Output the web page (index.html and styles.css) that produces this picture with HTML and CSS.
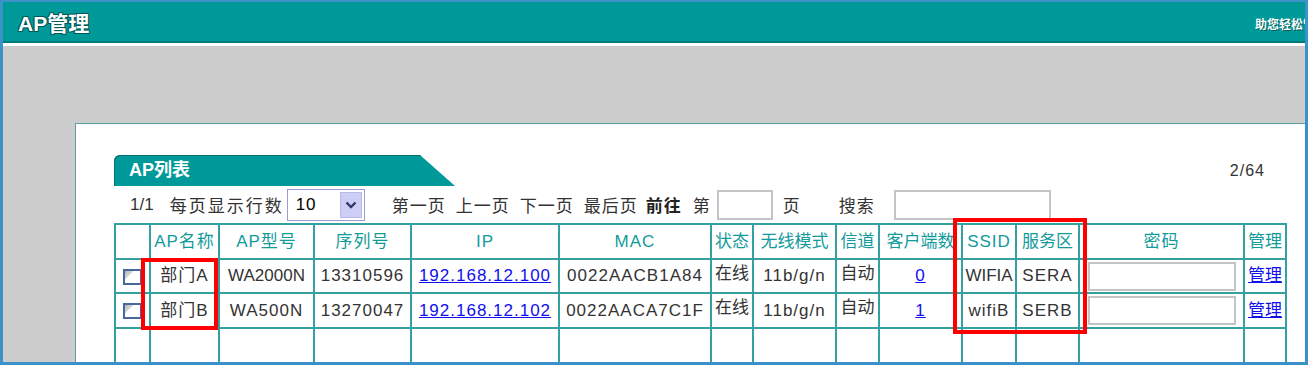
FILE: index.html
```html
<!DOCTYPE html>
<html lang="zh-CN">
<head>
    <meta charset="UTF-8">
    <title>AP管理</title>
    <link rel="stylesheet" href="styles.css">
</head>
<body>

<div class="frame">
    <div class="topbar">
        <h1 class="title">AP管理</h1>
        <span class="slogan">助您轻松管理</span>
    </div>

    <div class="workspace">
        <div class="panel">
            <div class="tab-row">
                <div class="tab">AP列表</div>
                <span class="count">2/64</span>
            </div>

            <div class="toolbar">
                <span class="pages">1/1</span>
                <span class="rows-label">每页显示行数</span>
                <div class="select">
                    <span class="select-value">10</span>
                    <span class="select-btn">
                        <svg width="12" height="8" viewBox="0 0 12 8"><path d="M1.5 1.5 L6 6 L10.5 1.5" fill="none" stroke="#2e3a6e" stroke-width="2.4"/></svg>
                    </span>
                </div>
                <span class="nav first">第一页</span>
                <span class="nav">上一页</span>
                <span class="nav">下一页</span>
                <span class="nav">最后页</span>
                <b class="goto">前往</b>
                <span class="page-pre">第</span>
                <span class="box page-box"></span>
                <span class="page-post">页</span>
                <span class="search-label">搜索</span>
                <span class="box search-box"></span>
            </div>

            <table class="ap-table">
                <colgroup>
                    <col style="width:35px"><col style="width:69px"><col style="width:95px"><col style="width:97px">
                    <col style="width:148px"><col style="width:152px"><col style="width:42px"><col style="width:83px">
                    <col style="width:43px"><col style="width:83px"><col style="width:54px"><col style="width:63px">
                    <col style="width:165px"><col style="width:42px">
                </colgroup>
                <tr class="head">
                    <th></th>
                    <th>AP名称</th>
                    <th>AP型号</th>
                    <th>序列号</th>
                    <th>IP</th>
                    <th>MAC</th>
                    <th class="tight">状态</th>
                    <th class="tight">无线模式</th>
                    <th class="tight">信道</th>
                    <th class="tight">客户端数</th>
                    <th>SSID</th>
                    <th class="tight">服务区</th>
                    <th>密码</th>
                    <th class="tight">管理</th>
                </tr>
                <tr class="row1">
                    <td><span class="check"></span></td>
                    <td>部门A</td>
                    <td class="tight">WA2000N</td>
                    <td>13310596</td>
                    <td><a href="#">192.168.12.100</a></td>
                    <td>0022AACB1A84</td>
                    <td class="tight up">在线</td>
                    <td>11b/g/n</td>
                    <td class="tight up">自动</td>
                    <td><a href="#">0</a></td>
                    <td class="tight">WIFIA</td>
                    <td>SERA</td>
                    <td class="pw"><span class="pw-input"></span></td>
                    <td class="tight"><a href="#">管理</a></td>
                </tr>
                <tr class="row2">
                    <td><span class="check"></span></td>
                    <td>部门B</td>
                    <td>WA500N</td>
                    <td>13270047</td>
                    <td><a href="#">192.168.12.102</a></td>
                    <td>0022AACA7C1F</td>
                    <td class="tight up">在线</td>
                    <td>11b/g/n</td>
                    <td class="tight up">自动</td>
                    <td><a href="#">1</a></td>
                    <td>wifiB</td>
                    <td>SERB</td>
                    <td class="pw"><span class="pw-input"></span></td>
                    <td class="tight"><a href="#">管理</a></td>
                </tr>
                <tr class="row3">
                    <td></td><td></td><td></td><td></td><td></td><td></td><td></td>
                    <td></td><td></td><td></td><td></td><td></td><td></td><td></td>
                </tr>
            </table>

            <div class="mark mark-name"></div>
            <div class="mark mark-ssid"></div>
        </div>
    </div>
</div>

</body>
</html>
```

FILE: styles.css
```css
html, body {
    margin: 0;
    padding: 0;
}

body {
    font-family: "Liberation Sans", "Noto Sans CJK SC", sans-serif;
    font-size: 17px;
    color: #333;
    background-color: #fff;
}

.frame {
    width: 1308px;
    height: 365px;
    box-sizing: border-box;
    border: 3px solid #3a92c8;
    border-top-width: 2px;
    display: flex;
    flex-direction: column;
    overflow: hidden;
}

.topbar {
    height: 39px;
    flex-shrink: 0;
    background-color: #009999;
    border-bottom: 2px solid #007b7b;
    display: flex;
    align-items: center;
    padding-left: 15px;
    overflow: hidden;
}

.title {
    margin: 0;
    font-size: 21px;
    font-weight: bold;
    color: #fff;
    text-shadow: 1px 1px 0 #005a5a, -1px -1px 0 #005a5a, 1px -1px 0 #005a5a, -1px 1px 0 #005a5a;
}

.slogan {
    margin-left: auto;
    margin-right: -22px;
    flex-shrink: 0;
    font-size: 12px;
    font-weight: bold;
    color: #fff;
    text-shadow: 1px 1px 0 #006060;
    align-self: flex-start;
    margin-top: 13px;
}

.workspace {
    flex: 1;
    background-color: #cccccc;
    border-top: 3px solid #fff;
    padding: 77px 0 0 72px;
    display: flex;
}

.panel {
    flex: 1;
    position: relative;
    background-color: #fff;
    border-top: 1px solid #5f9ea0;
    border-left: 1px solid #5f9ea0;
    padding: 31px 0 0 38px;
}

.tab-row {
    width: 1171px;
    display: flex;
    align-items: center;
    justify-content: space-between;
}

.tab {
    width: 341px;
    height: 31px;
    box-sizing: border-box;
    background-color: #009999;
    clip-path: polygon(0 0, 306px 0, 341px 100%, 0 100%);
    border-top-left-radius: 6px;
    box-shadow: inset 1px 1px 0 #0b6f6f;
    color: #fff;
    font-size: 18px;
    font-weight: bold;
    line-height: 31px;
    padding-left: 15px;
}

.count {
    padding-right: 20px;
    font-size: 16px;
    letter-spacing: 1px;
}

.toolbar {
    height: 37px;
    display: flex;
    align-items: center;
    padding-left: 16px;
    letter-spacing: 1px;
}

.pages {
    letter-spacing: 0;
}

.rows-label {
    margin-left: 16px;
    letter-spacing: 2px;
}

.select {
    margin-left: 3px;
    width: 78px;
    height: 32px;
    box-sizing: border-box;
    border: 1px solid #9c9cd4;
    display: flex;
    align-items: center;
    justify-content: space-between;
    padding: 0 2px 0 8px;
    color: #000;
}

.select-btn {
    width: 22px;
    height: 26px;
    box-sizing: border-box;
    background-color: #cdcdf5;
    border: 1px solid #b8b8ea;
    display: flex;
    align-items: center;
    justify-content: center;
}

.nav {
    margin-left: 10px;
}

.nav.first {
    margin-left: 27px;
}

.goto {
    margin-left: 8px;
    color: #222;
}

.page-pre {
    margin-left: 11px;
}

.box {
    display: inline-block;
    height: 30px;
    box-sizing: border-box;
    border: 2px solid #c4c4c4;
}

.page-box {
    width: 56px;
    margin-left: 6px;
}

.page-post {
    margin-left: 10px;
}

.search-label {
    margin-left: 38px;
}

.search-box {
    width: 157px;
    margin-left: 19px;
}

.ap-table {
    width: 1171px;
    table-layout: fixed;
    border-collapse: collapse;
    letter-spacing: 1px;
    line-height: 20px;
}

.ap-table th,
.ap-table td {
    border: 2px solid #35a0a0;
    padding: 0;
    text-align: center;
    white-space: nowrap;
    overflow: hidden;
    box-sizing: border-box;
}

.ap-table th {
    height: 35px;
    padding-top: 1px;
    font-weight: normal;
    color: #119b9b;
}

.ap-table .tight {
    letter-spacing: 0;
}

.row1 td {
    height: 34px;
}

.row2 td {
    height: 35px;
}

.row3 td {
    height: 35px;
}

.ap-table .up {
    vertical-align: top;
    padding-top: 4px;
}

.ap-table a {
    color: #1010ee;
    text-decoration: underline;
}

.check {
    display: inline-block;
    width: 19px;
    height: 16px;
    box-sizing: border-box;
    border: 2px solid #46689a;
    background: linear-gradient(135deg, #b4b4b4 0, #d8d8d8 30%, #fff 31%);
    vertical-align: middle;
}

.pw {
    text-align: left;
}

.pw-input {
    display: block;
    width: 148px;
    height: 29px;
    margin-left: 8px;
    box-sizing: border-box;
    border: 2px solid #c4c4c4;
}

.mark {
    position: absolute;
    border: 4px solid #ff0000;
    box-sizing: border-box;
}

.mark-name {
    left: 65px;
    top: 134px;
    width: 77px;
    height: 72px;
}

.mark-ssid {
    left: 877px;
    top: 94px;
    width: 134px;
    height: 116px;
}
```
